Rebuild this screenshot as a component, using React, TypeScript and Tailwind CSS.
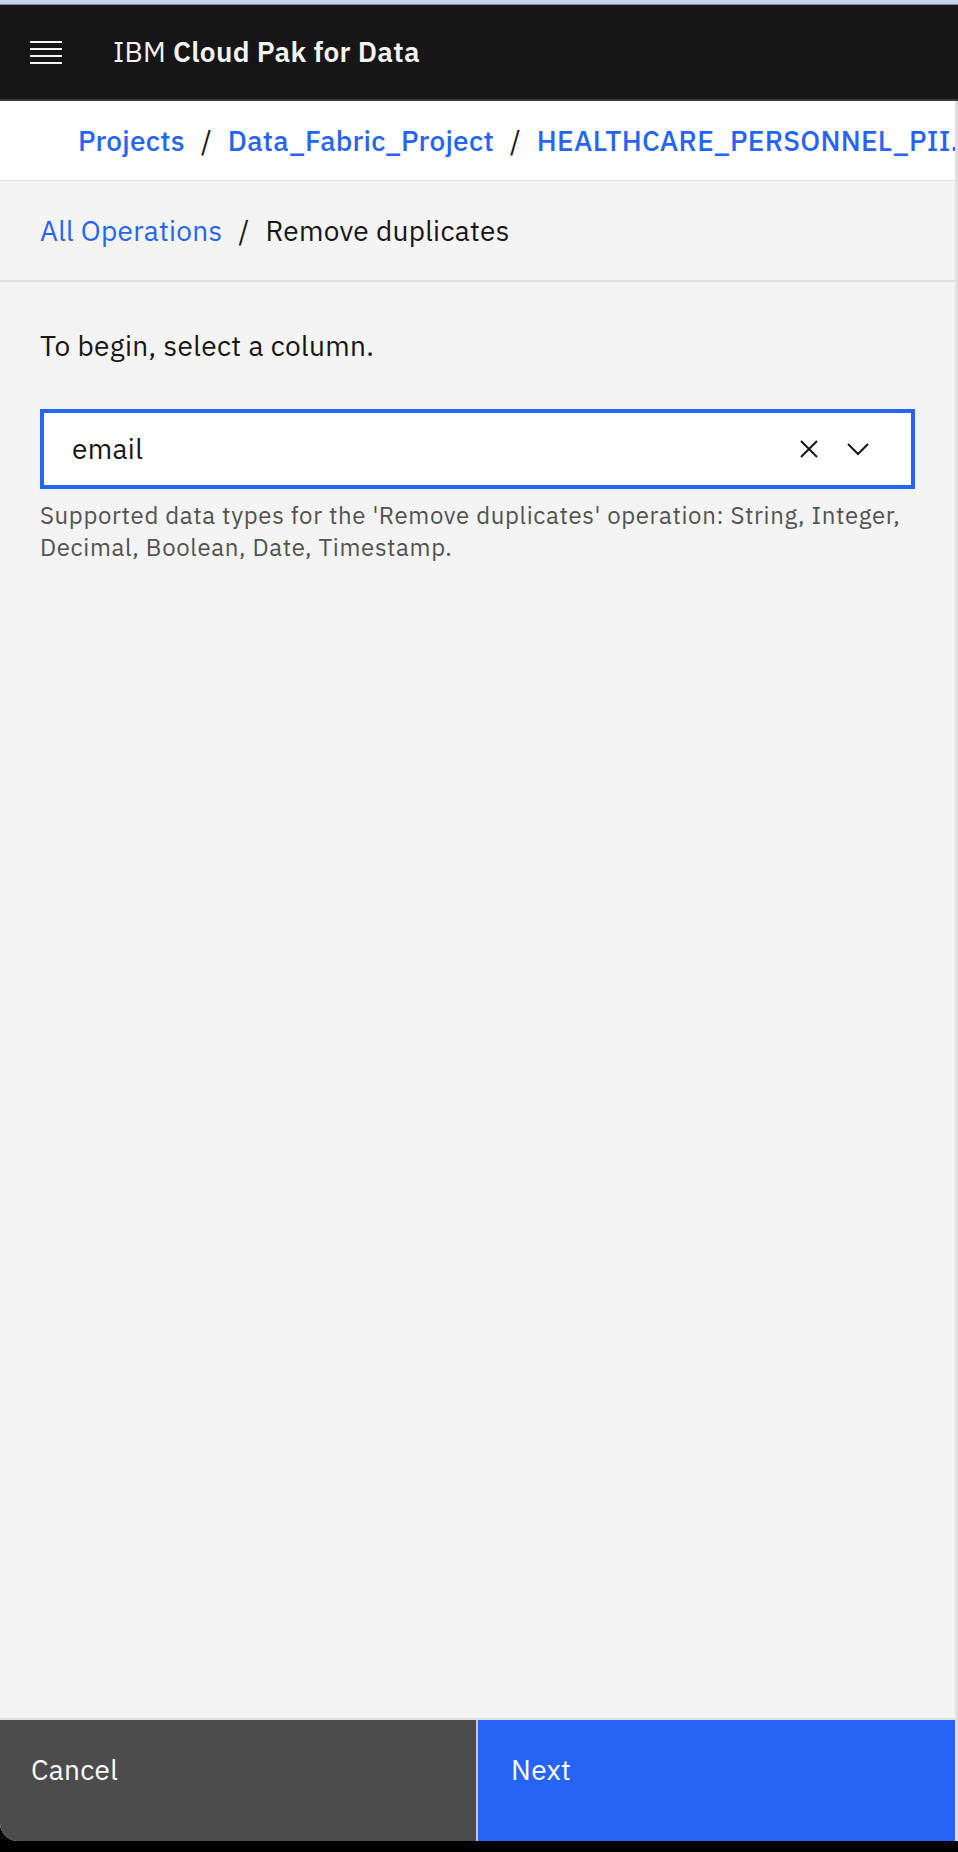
import React from "react";

const font = { fontFamily: '"IBM Plex Sans", Roboto, "Noto Sans", sans-serif' };

function Hamburger() {
  return (
    <svg width="32" height="23" viewBox="0 0 32 23" fill="#f4f4f4">
      <rect x="0" y="0" width="32" height="2" />
      <rect x="0" y="7" width="32" height="2" />
      <rect x="0" y="14" width="32" height="2" />
      <rect x="0" y="21" width="32" height="2" />
    </svg>
  );
}

function CloseIcon() {
  return (
    <svg width="18" height="18" viewBox="0 0 18 18" fill="none" stroke="#161616" strokeWidth="2">
      <path d="M1 1 L17 17 M17 1 L1 17" />
    </svg>
  );
}

function ChevronIcon() {
  return (
    <svg width="22" height="13" viewBox="0 0 22 13" fill="none" stroke="#161616" strokeWidth="2">
      <path d="M1 1 L11 11 L21 1" />
    </svg>
  );
}

export default function App() {
  return (
    <div
      className="w-[958px] h-[1852px] bg-black flex flex-col overflow-hidden"
      style={font}
    >
      <div className="h-[4px] bg-[#c6d4f0] shrink-0" />
      <div className="h-px bg-[#7d8799] shrink-0" />
      <header className="h-[96px] shrink-0 bg-[#161616] border-b-2 border-[#393939] flex items-center pl-[30px]">
        <Hamburger />
        <div className="ml-[51px] text-[28px] leading-[36px] text-[#f4f4f4] tracking-[0.3px]">
          IBM <span className="font-semibold">Cloud Pak for Data</span>
        </div>
      </header>

      <div className="flex-1 flex flex-col bg-[#f4f4f4] border-r-[3px] border-[#e0e0e0] rounded-bl-[18px] overflow-hidden">
        <nav className="h-[80px] shrink-0 bg-white border-b border-[#e0e0e0] flex items-center pl-[78px] whitespace-nowrap overflow-hidden text-[28px] leading-[36px] tracking-[0.25px]">
          <span className="text-[#2664f5] font-medium">Projects</span>
          <span className="text-[#161616] mx-[16px]">/</span>
          <span className="text-[#2664f5] font-medium">Data_Fabric_Project</span>
          <span className="text-[#161616] mx-[16px]">/</span>
          <span className="text-[#2664f5] font-medium">HEALTHCARE_PERSONNEL_PII.csv</span>
        </nav>

        <div className="h-[101px] shrink-0 border-b-2 border-[#e0e0e0] flex items-center px-[40px] text-[28px] leading-[36px] tracking-[0.3px]">
          <span className="text-[#2664f5]">All Operations</span>
          <span className="text-[#161616] mx-[16px]">/</span>
          <span className="text-[#161616]">Remove duplicates</span>
        </div>

        <div className="flex-1 px-[40px] pt-[46px]">
          <p className="text-[28px] leading-[36px] text-[#161616] tracking-[0.35px]">To begin, select a column.</p>
          <div className="mt-[45px] h-[80px] border-4 border-[#2664f5] bg-white flex items-center pl-[28px] pr-[42px]">
            <span className="flex-1 text-[28px] leading-[36px] text-[#161616] tracking-[0.35px]">email</span>
            <CloseIcon />
            <div className="ml-[29px]">
              <ChevronIcon />
            </div>
          </div>
          <p className="mt-[10px] text-[24px] leading-[32px] text-[#525252] tracking-[0.64px]">
            Supported data types for the 'Remove duplicates' operation: String, Integer, Decimal, Boolean, Date, Timestamp.
          </p>
        </div>

        <footer className="h-[123px] shrink-0 border-t-2 border-[#e0e0e0] flex">
          <div className="w-[476px] bg-[#4c4c4c] pl-[31px] pt-[32px] text-[28px] leading-[36px] text-white tracking-[0.35px]">
            Cancel
          </div>
          <div className="w-[2px] bg-[#c6c6c6]" />
          <div className="flex-1 bg-[#2664f5] pl-[33px] pt-[32px] text-[28px] leading-[36px] text-white tracking-[0.35px]">
            Next
          </div>
        </footer>
      </div>
      <div className="h-[11px] shrink-0 bg-black" />
    </div>
  );
}
